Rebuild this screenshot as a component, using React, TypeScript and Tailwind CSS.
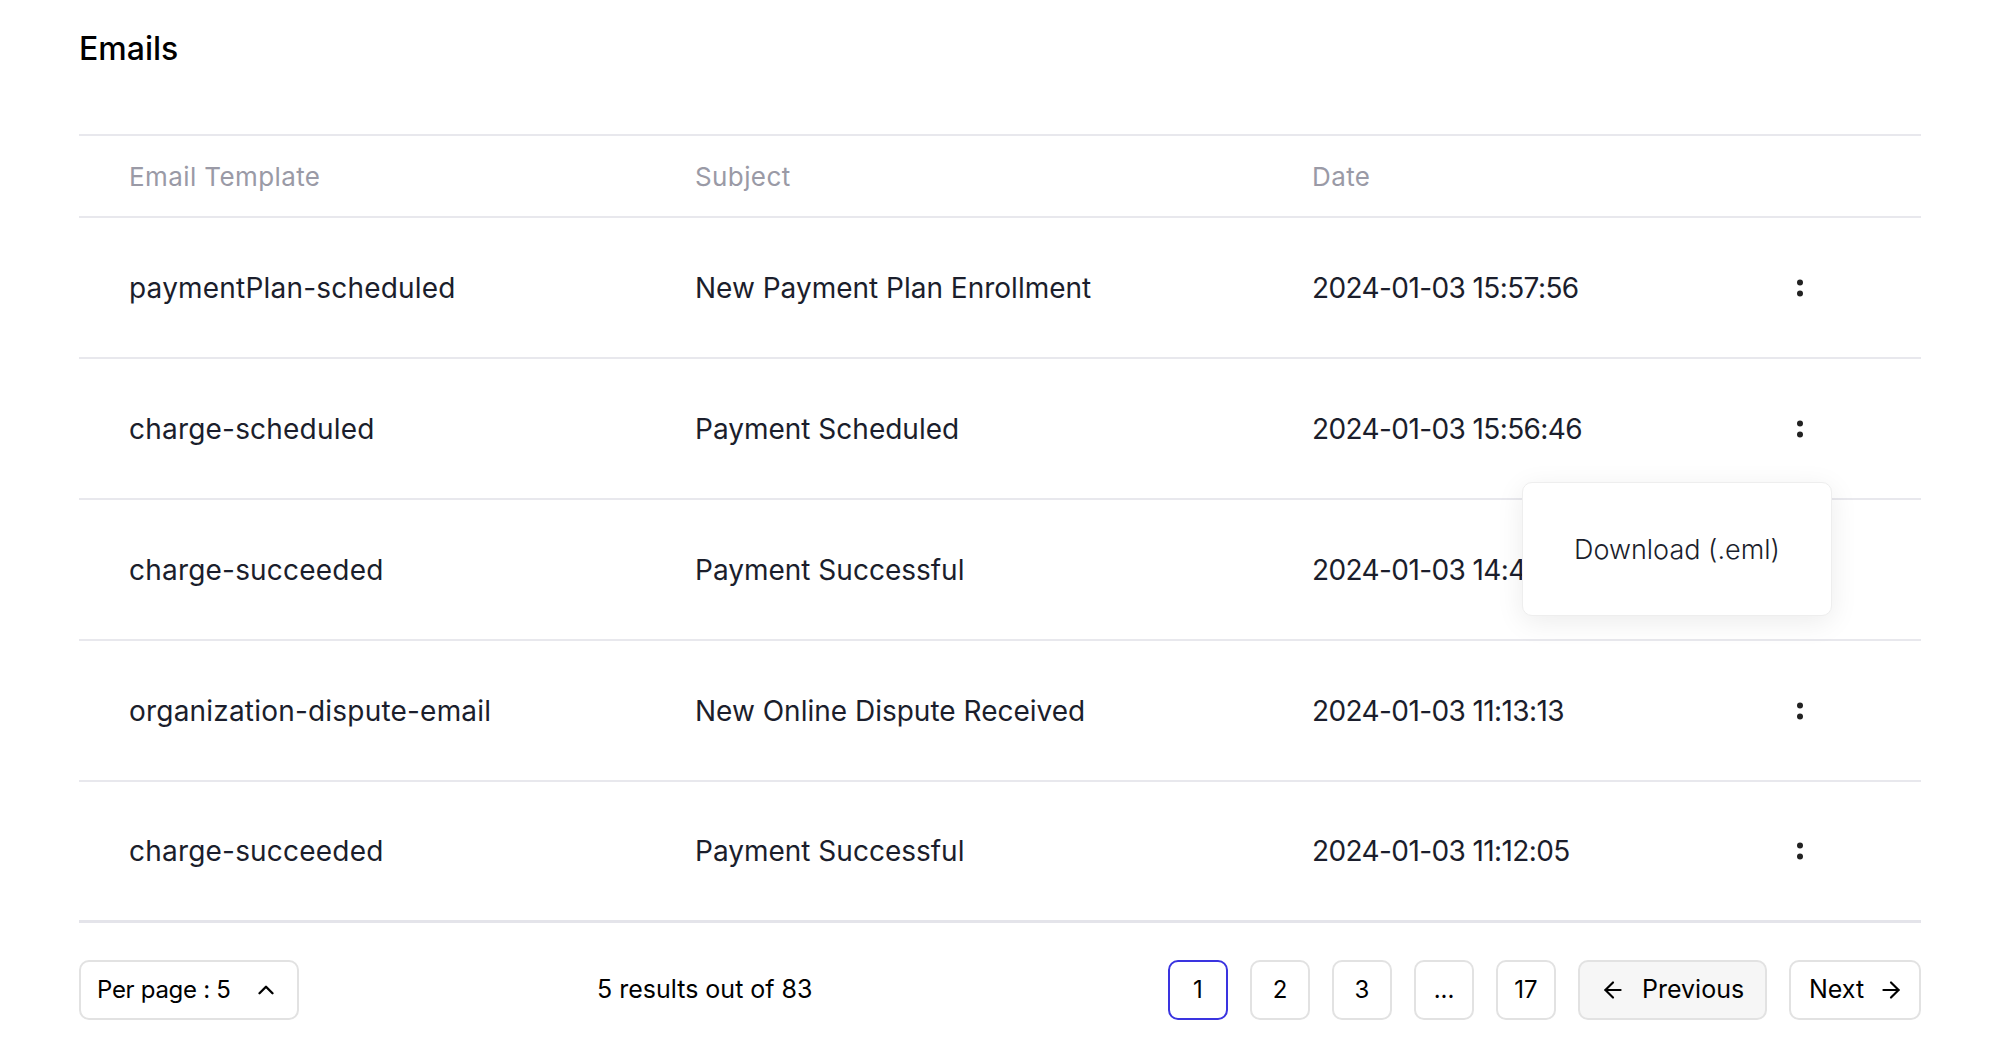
import React from 'react';
import { ArrowLeft, ArrowRight, ChevronUp } from 'lucide-react';

interface EmailRow {
    template: string;
    subject: string;
    date: string;
}

const rows: EmailRow[] = [
    { template: 'paymentPlan-scheduled', subject: 'New Payment Plan Enrollment', date: '2024-01-03 15:57:56' },
    { template: 'charge-scheduled', subject: 'Payment Scheduled', date: '2024-01-03 15:56:46' },
    { template: 'charge-succeeded', subject: 'Payment Successful', date: '2024-01-03 14:47:31' },
    { template: 'organization-dispute-email', subject: 'New Online Dispute Received', date: '2024-01-03 11:13:13' },
    { template: 'charge-succeeded', subject: 'Payment Successful', date: '2024-01-03 11:12:05' },
];

const pages = ['1', '2', '3', '...', '17'];

const Kebab = () => (
    <svg width="10" height="22" viewBox="0 0 10 22" className="text-[#222]">
        <circle cx="5" cy="5.5" r="3" fill="currentColor" />
        <circle cx="5" cy="16.5" r="3" fill="currentColor" />
    </svg>
);

const App: React.FC = () => {
    return (
        <div className="min-h-screen bg-white px-[79px] pt-[29px] font-['Inter',sans-serif]">
            <h1 className="text-[32px] leading-[40px] font-medium text-black">Emails</h1>

            <div className="relative mt-[65px]">
                {/* header */}
                <div className="grid h-[84px] grid-cols-[566px_617px_1fr_40px] items-center border-y-2 border-[#e8e8ed] pl-[50px] pr-[101px] text-[26px] tracking-[0.4px] text-[#9a9aa6]">
                    <span>Email Template</span>
                    <span>Subject</span>
                    <span>Date</span>
                    <span />
                </div>

                {rows.map((row, i) => (
                    <div
                        key={i}
                        className={
                            'grid h-[141px] grid-cols-[566px_617px_1fr_40px] items-center pl-[50px] pr-[101px] text-[28px] text-[#1b1e2c] ' +
                            (i === rows.length - 1 ? 'border-b-[3px] border-[#e4e4ea]' : 'border-b-2 border-[#e8e8ed]')
                        }
                    >
                        <span className="tracking-[0.2px]">{row.template}</span>
                        <span>{row.subject}</span>
                        <span className="tracking-[-0.6px]">{row.date}</span>
                        <span className="flex justify-center">
                            <Kebab />
                        </span>
                    </div>
                ))}

                {/* row actions menu */}
                <div className="absolute left-[1443px] top-[348px] flex h-[134px] w-[310px] items-center justify-center rounded-[10px] border border-[#eeeeee] bg-white shadow-[0_6px_28px_rgba(0,0,0,0.08)]">
                    <span className="mt-[3px] text-[27px] font-light text-[#1b1e2c]">Download (.eml)</span>
                </div>
            </div>

            {/* footer */}
            <div className="mt-[37px] flex items-center text-[24px] text-black">
                <button className="flex h-[60px] w-[220px] items-center gap-[22px] rounded-[10px] border-2 border-[#e2e2e2] pl-[16px]">
                    <span className="tracking-[-0.3px]">Per page : 5</span>
                    <ChevronUp size={26} strokeWidth={2.2} />
                </button>

                <span className="ml-[298px] text-[25px]">5 results out of 83</span>

                <div className="ml-auto flex items-center gap-[22px]">
                    {pages.map(p => (
                        <button
                            key={p}
                            className={
                                'flex h-[60px] w-[60px] items-center justify-center rounded-[10px] border-2 ' +
                                (p === '1' ? 'border-[#3a34e0]' : 'border-[#e2e2e2]')
                            }
                        >
                            {p}
                        </button>
                    ))}
                    <button className="flex h-[60px] w-[189px] items-center gap-[16px] rounded-[10px] border-2 border-[#e2e2e2] bg-[#f6f6f6] pl-[20px] text-[25px]">
                        <ArrowLeft size={26} strokeWidth={2} />
                        <span>Previous</span>
                    </button>
                    <button className="flex h-[60px] w-[132px] items-center gap-[14px] rounded-[10px] border-2 border-[#e2e2e2] pl-[18px] text-[25px]">
                        <span>Next</span>
                        <ArrowRight size={26} strokeWidth={2} />
                    </button>
                </div>
            </div>
        </div>
    );
};

export default App;
